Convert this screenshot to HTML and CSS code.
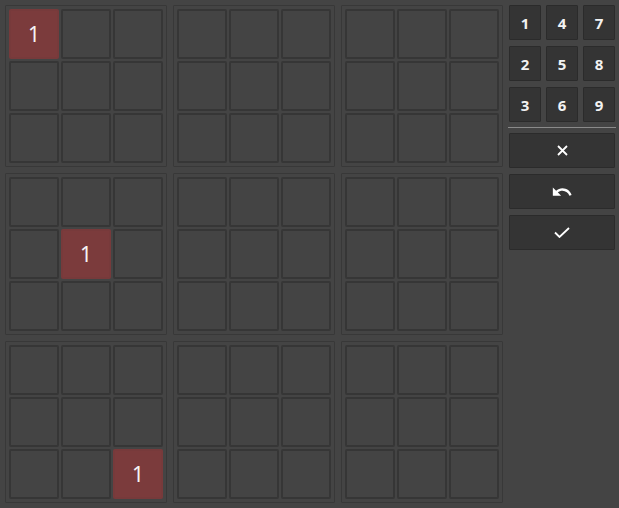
FILE: index.html
```html
<!DOCTYPE html>
<html>
<head>
<meta charset="utf-8">
<link rel="stylesheet" href="styles.css">
</head>
<body>
<div class="app">
  <div class="board">
    <div class="block">
      <div class="cell marked">1</div><div class="cell"></div><div class="cell"></div>
      <div class="cell"></div><div class="cell"></div><div class="cell"></div>
      <div class="cell"></div><div class="cell"></div><div class="cell"></div>
    </div>
    <div class="block">
      <div class="cell"></div><div class="cell"></div><div class="cell"></div>
      <div class="cell"></div><div class="cell"></div><div class="cell"></div>
      <div class="cell"></div><div class="cell"></div><div class="cell"></div>
    </div>
    <div class="block">
      <div class="cell"></div><div class="cell"></div><div class="cell"></div>
      <div class="cell"></div><div class="cell"></div><div class="cell"></div>
      <div class="cell"></div><div class="cell"></div><div class="cell"></div>
    </div>
    <div class="block">
      <div class="cell"></div><div class="cell"></div><div class="cell"></div>
      <div class="cell"></div><div class="cell marked">1</div><div class="cell"></div>
      <div class="cell"></div><div class="cell"></div><div class="cell"></div>
    </div>
    <div class="block">
      <div class="cell"></div><div class="cell"></div><div class="cell"></div>
      <div class="cell"></div><div class="cell"></div><div class="cell"></div>
      <div class="cell"></div><div class="cell"></div><div class="cell"></div>
    </div>
    <div class="block">
      <div class="cell"></div><div class="cell"></div><div class="cell"></div>
      <div class="cell"></div><div class="cell"></div><div class="cell"></div>
      <div class="cell"></div><div class="cell"></div><div class="cell"></div>
    </div>
    <div class="block">
      <div class="cell"></div><div class="cell"></div><div class="cell"></div>
      <div class="cell"></div><div class="cell"></div><div class="cell"></div>
      <div class="cell"></div><div class="cell"></div><div class="cell marked">1</div>
    </div>
    <div class="block">
      <div class="cell"></div><div class="cell"></div><div class="cell"></div>
      <div class="cell"></div><div class="cell"></div><div class="cell"></div>
      <div class="cell"></div><div class="cell"></div><div class="cell"></div>
    </div>
    <div class="block">
      <div class="cell"></div><div class="cell"></div><div class="cell"></div>
      <div class="cell"></div><div class="cell"></div><div class="cell"></div>
      <div class="cell"></div><div class="cell"></div><div class="cell"></div>
    </div>
  </div>
  <div class="panel">
    <div class="keypad">
      <button class="key">1</button><button class="key">4</button><button class="key">7</button>
      <button class="key">2</button><button class="key">5</button><button class="key">8</button>
      <button class="key">3</button><button class="key">6</button><button class="key">9</button>
    </div>
    <div class="sep"></div>
    <button class="action">
      <svg width="11" height="11" viewBox="0 0 11 11"><path d="M1 1L10 10M10 1L1 10" stroke="#fff" stroke-width="1.8" fill="none"/></svg>
    </button>
    <button class="action">
      <svg width="22" height="22" viewBox="0 0 24 24"><path d="M12.5 8c-2.65 0-5.05.99-6.9 2.6L2 7v9h9l-3.62-3.62c1.39-1.16 3.16-1.88 5.12-1.88 3.54 0 6.55 2.31 7.6 5.5l2.37-.78C21.08 11.03 17.15 8 12.5 8z" fill="#fff"/></svg>
    </button>
    <button class="action">
      <svg width="16" height="11" viewBox="0 0 16 11"><path d="M1 5.5L5.5 10L15 1" stroke="#fff" stroke-width="1.8" fill="none"/></svg>
    </button>
  </div>
</div>
</body>
</html>
```

FILE: styles.css
```css
html, body {
  margin: 0;
  padding: 0;
  background: #444444;
}
body {
  padding: 5px;
  font-family: "Noto Sans", "Open Sans", sans-serif;
}
.app {
  display: flex;
  gap: 6px;
  align-items: flex-start;
}
.board {
  display: grid;
  grid-template-columns: repeat(3, 162px);
  grid-auto-rows: 162px;
  gap: 6px;
}
.block {
  box-sizing: border-box;
  border: 1px solid #383838;
  border-radius: 1px;
  padding: 3px;
  display: grid;
  grid-template-columns: repeat(3, 50px);
  grid-auto-rows: 50px;
  gap: 2px;
}
.cell {
  box-sizing: border-box;
  border: 2px solid #363636;
  border-radius: 2px;
  background: #444444;
  color: #f4f4f4;
  font-size: 21px;
  display: flex;
  align-items: center;
  justify-content: center;
  line-height: 1;
}
.cell.marked {
  background: #7b3b3c;
  border-color: #773a3b;
}
.panel {
  width: 106px;
  display: flex;
  flex-direction: column;
}
.keypad {
  display: grid;
  grid-template-columns: repeat(3, 32px);
  grid-auto-rows: 35px;
  column-gap: 5px;
  row-gap: 6px;
}
button {
  font-family: inherit;
  margin: 0;
  padding: 0;
  box-sizing: border-box;
  background: #343434;
  border: 1px solid #2b2b2b;
  border-radius: 1px;
  color: #f2f2f2;
  display: flex;
  align-items: center;
  justify-content: center;
}
.key {
  font-size: 15px;
  font-weight: 700;
}
.sep {
  height: 1px;
  background: #8a8a8a;
  margin: 5px -1px 5px -1px;
}
.action {
  height: 35px;
  width: 106px;
  margin-bottom: 6px;
}
```
